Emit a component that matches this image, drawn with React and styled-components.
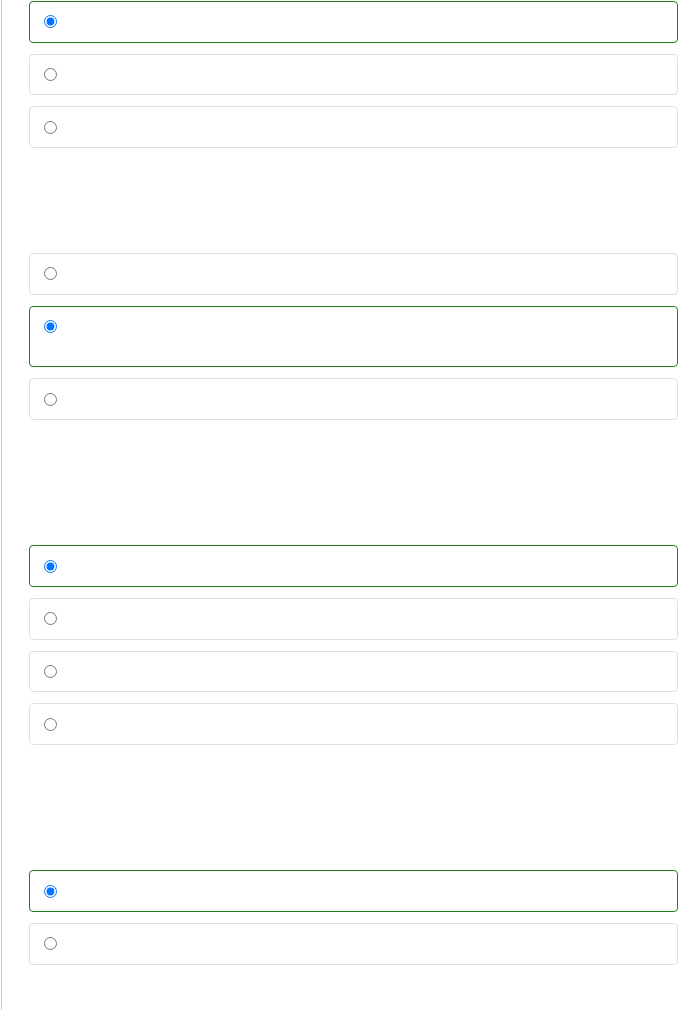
import React from "react";
import styled, { createGlobalStyle } from "styled-components";

const Global = createGlobalStyle`
  html, body { margin: 0; padding: 0; background: #ffffff; }
  body { font-family: "Liberation Sans", Arial, sans-serif; color: #ffffff; }
`;

const Page = styled.main`
  box-sizing: border-box;
  min-height: 100vh;
  margin-left: 1px;
  border-left: 1px solid #cdcdcd;
  padding: 1px 0 0 27px;
`;

const Question = styled.div`
  box-sizing: border-box;
  font-size: 16px;
  line-height: 20.33px;
  min-height: ${(p) => 84.67 + p.$lines * 20.33}px;
`;

const Options = styled.div`
  display: flex;
  flex-direction: column;
  gap: 11px;
`;

const Option = styled.label`
  box-sizing: border-box;
  display: flex;
  align-items: flex-start;
  gap: 10px;
  padding: 9.83px 14px;
  border: 1px solid ${(p) => (p.$selected ? "#1f7d1f" : "#e0e0e0")};
  border-radius: 4px;
  background: #ffffff;
`;

const Radio = styled.input.attrs({ type: "radio" })`
  width: 13px;
  height: 13px;
  margin: 3.5px 0 0 0;
  flex: none;
  accent-color: #0075ff;
`;

const Text = styled.span`
  display: block;
  flex: 1;
  font-size: 15px;
  line-height: 20px;
  min-height: ${(p) => p.$lines * 20}px;
`;

const groups = [
  { q: 0, selected: 0, lines: [1, 1, 1] },
  { q: 1, selected: 1, lines: [1, 2, 1] },
  { q: 2, selected: 0, lines: [1, 1, 1, 1] },
  { q: 2, selected: 0, lines: [1, 1] },
];

export default function App() {
  return (
    <>
      <Global />
      <Page>
        {groups.map((g, gi) => (
          <section key={gi}>
            {g.q > 0 && <Question $lines={g.q} />}
            <Options>
              {g.lines.map((l, oi) => (
                <Option key={oi} $selected={oi === g.selected}>
                  <Radio name={`q${gi}`} defaultChecked={oi === g.selected} />
                  <Text $lines={l} />
                </Option>
              ))}
            </Options>
          </section>
        ))}
      </Page>
    </>
  );
}
